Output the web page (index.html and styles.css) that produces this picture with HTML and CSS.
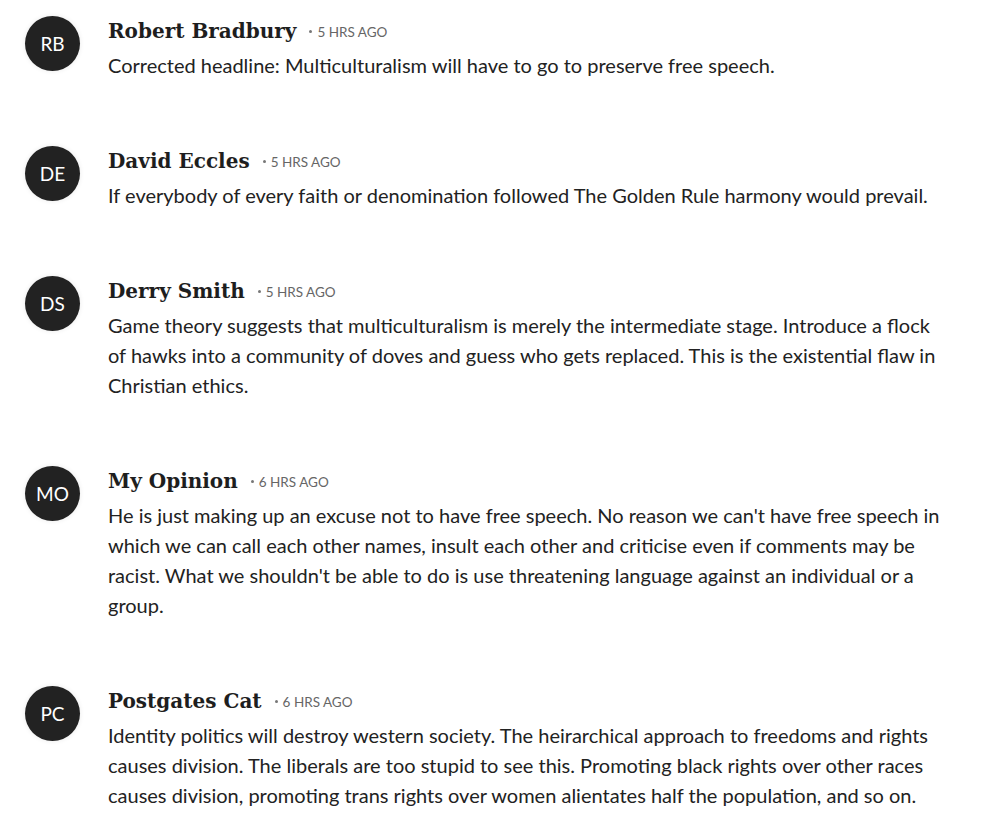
FILE: index.html
```html
<!DOCTYPE html>
<html lang="en">
<head>
<meta charset="utf-8">
<title>Comments</title>
<link rel="stylesheet" href="styles.css">
</head>
<body>
<div class="comments">
  <div class="comment">
    <div class="avatar">RB</div>
    <div class="content">
      <div class="meta"><span class="name">Robert Bradbury</span><span class="dot"></span><span class="time">5 HRS AGO</span></div>
      <p class="text">Corrected headline: Multiculturalism will have to go to preserve free speech.</p>
    </div>
  </div>
  <div class="comment">
    <div class="avatar">DE</div>
    <div class="content">
      <div class="meta"><span class="name">David Eccles</span><span class="dot"></span><span class="time">5 HRS AGO</span></div>
      <p class="text">If everybody of every faith or denomination followed The Golden Rule harmony would prevail.</p>
    </div>
  </div>
  <div class="comment">
    <div class="avatar">DS</div>
    <div class="content">
      <div class="meta"><span class="name">Derry Smith</span><span class="dot"></span><span class="time">5 HRS AGO</span></div>
      <p class="text">Game theory suggests that multiculturalism is merely the intermediate stage. Introduce a flock of hawks into a community of doves and guess who gets replaced. This is the existential flaw in Christian ethics.</p>
    </div>
  </div>
  <div class="comment">
    <div class="avatar">MO</div>
    <div class="content">
      <div class="meta"><span class="name">My Opinion</span><span class="dot"></span><span class="time">6 HRS AGO</span></div>
      <p class="text">He is just making up an excuse not to have free speech. No reason we can't have free speech in which we can call each other names, insult each other and criticise even if comments may be racist. What we shouldn't be able to do is use threatening language against an individual or a group.</p>
    </div>
  </div>
  <div class="comment">
    <div class="avatar">PC</div>
    <div class="content">
      <div class="meta"><span class="name">Postgates Cat</span><span class="dot"></span><span class="time">6 HRS AGO</span></div>
      <p class="text">Identity politics will destroy western society. The heirarchical approach to freedoms and rights causes division. The liberals are too stupid to see this. Promoting black rights over other races causes division, promoting trans rights over women alientates half the population, and so on.</p>
    </div>
  </div>
</div>
</body>
</html>
```
FILE: styles.css
```css
html, body {
  margin: 0;
  padding: 0;
  background: #fff;
}
.comments {
  padding: 16px 43px 0 25px;
  display: flex;
  flex-direction: column;
  gap: 66px;
  font-family: Lato, "Open Sans", sans-serif;
  color: #222;
}
.comment {
  display: flex;
  align-items: flex-start;
  gap: 28px;
}
.avatar {
  flex: 0 0 55px;
  width: 55px;
  height: 55px;
  border-radius: 50%;
  background: #222;
  color: #fff;
  display: flex;
  align-items: center;
  justify-content: center;
  font-family: Lato, "Open Sans", sans-serif;
  font-size: 19px;
  box-shadow: 0 0 5px rgba(0, 0, 0, 0.09);
}
.content {
  flex: 1;
  min-width: 0;
}
.meta {
  display: flex;
  align-items: center;
  height: 30px;
}
.name {
  font-family: "DejaVu Serif", "Liberation Serif", serif;
  font-weight: bold;
  font-size: 20px;
  line-height: 30px;
  color: #1e1e1e;
}
.dot {
  width: 3px;
  height: 3px;
  border-radius: 50%;
  background: #777;
  margin: 0 5px 0 13px;
}
.time {
  font-size: 13.5px;
  color: #666;
  line-height: 16px;
  margin-top: 1px;
}
.text {
  margin: 4px 0 0;
  font-size: 20px;
  line-height: 30px;
  color: #222;
}
```
